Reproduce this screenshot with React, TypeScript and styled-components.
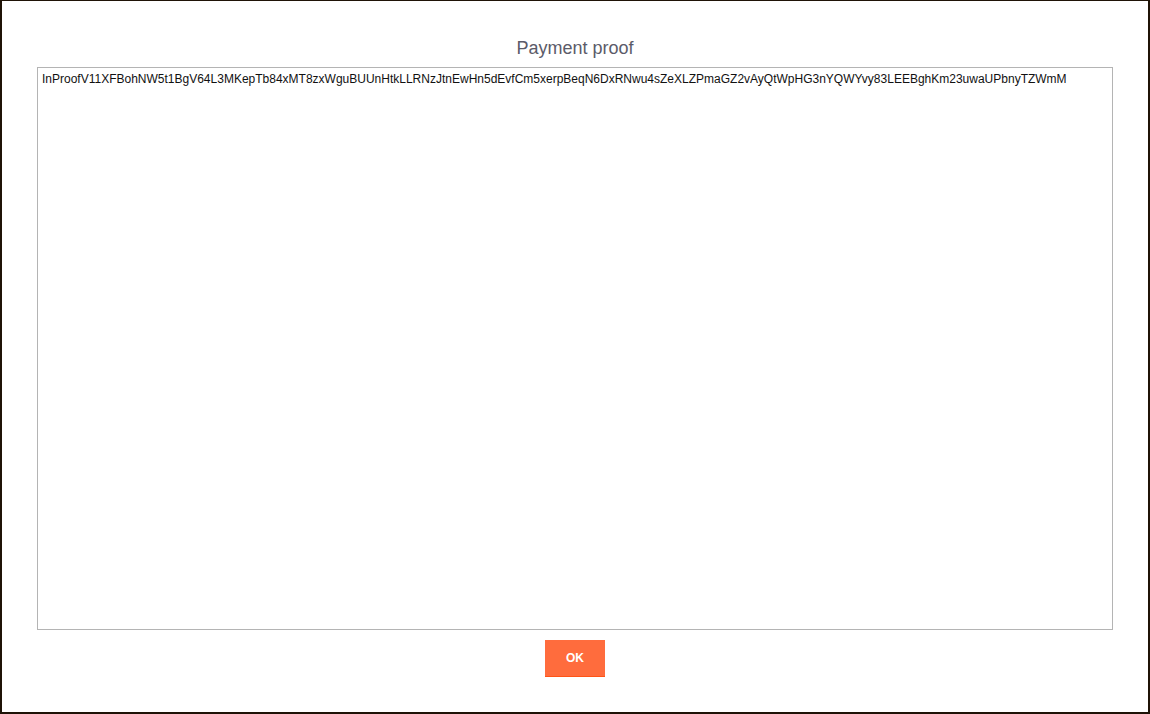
import React from "react";
import styled, { createGlobalStyle } from "styled-components";

const GlobalStyle = createGlobalStyle`
  html, body {
    margin: 0;
    padding: 0;
    background: #ffffff;
  }
  body {
    font-family: "Liberation Sans", Arial, sans-serif;
  }
  * { box-sizing: border-box; }
`;

const Frame = styled.div`
  width: 1150px;
  height: 714px;
  border-style: solid;
  border-color: #1f1307;
  border-width: 1px 2px 2px 2px;
  background: #ffffff;
  padding: 37px 35px 0 35px;
  display: flex;
  flex-direction: column;
  align-items: stretch;
`;

const Title = styled.h2`
  margin: 0 0 9px 0;
  font-family: "Liberation Sans", Arial, sans-serif;
  font-weight: 400;
  font-size: 18px;
  line-height: 20px;
  color: #5b5b69;
  text-align: center;
`;

const ProofBox = styled.textarea`
  display: block;
  width: 100%;
  height: 563px;
  margin: 0;
  padding: 4px 4px;
  border: 1px solid #b4b4b4;
  border-radius: 0;
  resize: none;
  outline: none;
  font-family: "Liberation Sans", Arial, sans-serif;
  font-size: 12px;
  line-height: 14px;
  color: #111111;
  background: #ffffff;
  overflow: hidden;
`;

const Actions = styled.div`
  display: flex;
  justify-content: center;
  padding-top: 10px;
`;

const OkButton = styled.button`
  width: 60px;
  height: 37px;
  margin: 0;
  padding: 0;
  border: none;
  border-bottom: 1px solid #ff5416;
  border-radius: 0;
  background: #ff6c3d;
  color: #ffffff;
  font-family: "Liberation Sans", Arial, sans-serif;
  font-weight: 700;
  font-size: 12px;
  cursor: pointer;
`;

const proof =
  "InProofV11XFBohNW5t1BgV64L3MKepTb84xMT8zxWguBUUnHtkLLRNzJtnEwHn5dEvfCm5xerpBeqN6DxRNwu4sZeXLZPmaGZ2vAyQtWpHG3nYQWYvy83LEEBghKm23uwaUPbnyTZWmM";

export default function App() {
  return (
    <>
      <GlobalStyle />
      <Frame>
        <Title>Payment proof</Title>
        <ProofBox readOnly value={proof} />
        <Actions>
          <OkButton type="button">OK</OkButton>
        </Actions>
      </Frame>
    </>
  );
}
